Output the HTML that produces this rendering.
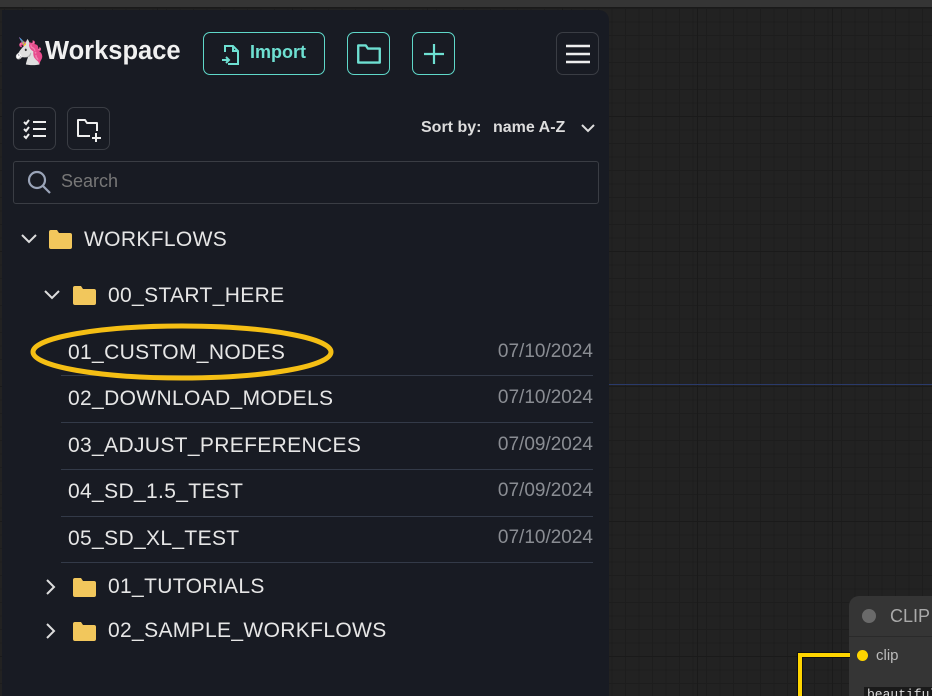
<!DOCTYPE html>
<html><head><meta charset="utf-8"><style>
*{box-sizing:border-box;margin:0;padding:0}
html,body{width:932px;height:696px;overflow:hidden}
body{position:relative;font-family:"Liberation Sans",sans-serif;
background-color:#222;
background-image:linear-gradient(#1a1a1a 1px,transparent 1px),linear-gradient(90deg,#1a1a1a 1px,transparent 1px),linear-gradient(#1d1d1d 1px,transparent 1px),linear-gradient(90deg,#1d1d1d 1px,transparent 1px);
background-size:135px 135px,135px 135px,13.5px 13.5px,13.5px 13.5px;
background-position:0 116px,562px 0,0 8px,4px 0}
.top{position:absolute;left:0;top:0;width:932px;height:8px;background:#353535;border-bottom:1px solid #1a1a1a}
.blue{position:absolute;left:608px;top:384px;width:324px;height:1px;background:#2a3a6a}
.panel{position:absolute;left:2px;top:10px;width:607px;height:686px;background:#181b23;border-radius:0 10px 0 0}
.a{position:absolute}
.btn{position:absolute;border:1px solid #5fd8c9;border-radius:7px;height:43px;top:32px;color:#6ee0d2}
.gbtn{position:absolute;border:1px solid #3a3d44;border-radius:7px;height:43px;width:43px}
.t{position:absolute;color:#e6e6e6;font-size:21px;letter-spacing:0.35px}
.d{position:absolute;right:339px;color:#8a8d93;font-size:19px}
.sep{position:absolute;left:61px;width:532px;height:1px;background:#333a48}
</style></head><body>
<div class="top"></div><div class="blue"></div>
<div class="panel"></div>
<div class="a" style="left:13px;top:36px;font-size:26px">🦄</div>
<div class="t" style="left:45px;top:37px;font-size:25.5px;letter-spacing:0;font-weight:bold;color:#f0f0f0">Workspace</div>
<div class="btn" style="left:203px;width:122px">
<svg class="a" style="left:16px;top:10px" width="22" height="24" viewBox="0 0 22 24" fill="none" stroke="#6ee0d2" stroke-width="2"><path d="M5 9V3h8l5 5v13H8"/><path d="M13 3v5h5"/><path d="M2 17h7M6 14l3 3-3 3"/></svg>
<span class="a" style="left:46px;top:9px;font-size:18px;font-weight:bold">Import</span></div>
<div class="btn" style="left:347px;width:43px"><svg class="a" style="left:7px;top:7px" width="28" height="28" viewBox="0 0 26 26" fill="none" stroke="#6ee0d2" stroke-width="2.2"><path d="M3 5h7l2 3h11v13H3z" stroke-linejoin="round"/></svg></div>
<div class="btn" style="left:412px;width:43px"><svg class="a" style="left:9px;top:9px" width="24" height="24" fill="none" stroke="#6ee0d2" stroke-width="2.2"><path d="M12 2v20M2 12h20"/></svg></div>
<div class="gbtn" style="left:556px;top:32px"><svg class="a" style="left:8px;top:10px" width="26" height="22" stroke="#eee" stroke-width="2.6"><path d="M1 3h24M1 11h24M1 19h24"/></svg></div>
<div class="gbtn" style="left:13px;top:107px"><svg class="a" style="left:8px;top:9px" width="26" height="24" fill="none" stroke="#eee" stroke-width="2"><path d="M2 5l2 2 3-4M2 12l2 2 3-4M2 19l2 2 3-4M11 5h13M11 12h13M11 19h13"/></svg></div>
<div class="gbtn" style="left:67px;top:107px"><svg class="a" style="left:8px;top:8px" width="28" height="28" fill="none" stroke="#eee" stroke-width="2"><path d="M14 20H2V4h7l2 3h10v8" stroke-linejoin="round"/><path d="M20 17v9M16 22h9"/></svg></div>
<div class="t" style="left:421px;top:119px;font-size:16px;letter-spacing:0;font-weight:bold;color:#ddd">Sort by:</div>
<div class="t" style="left:493px;top:119px;font-size:16px;letter-spacing:0;font-weight:bold;color:#ddd">name A-Z</div>
<svg class="a" style="left:580px;top:122px" width="16" height="12" fill="none" stroke="#ddd" stroke-width="2"><path d="M2 3l6 6 6-6"/></svg>
<div class="a" style="left:13px;top:161px;width:586px;height:43px;border:1px solid #3a3d44;border-radius:3px"></div>
<svg class="a" style="left:27px;top:170px" width="26" height="26" fill="none" stroke="#9aa4b8" stroke-width="2.2"><circle cx="10" cy="10" r="8"/><path d="M16 16l7 7"/></svg>
<div class="t" style="left:61px;top:171px;font-size:18px;letter-spacing:0;color:#777">Search</div>
<svg class="a" style="left:20px;top:233px" width="18" height="12" fill="none" stroke="#ddd" stroke-width="2"><path d="M2 2l7 7 7-7"/></svg>
<svg class="a" style="left:48px;top:228px" width="25" height="22"><path d="M1 4q0-2 2-2h6l2 3h11q2 0 2 2v12q0 2-2 2H3q-2 0-2-2z" fill="#f2c75c"/></svg>
<div class="t" style="left:84px;top:228px">WORKFLOWS</div>
<svg class="a" style="left:43px;top:289px" width="18" height="12" fill="none" stroke="#ddd" stroke-width="2"><path d="M2 2l7 7 7-7"/></svg>
<svg class="a" style="left:72px;top:284px" width="25" height="22"><path d="M1 4q0-2 2-2h6l2 3h11q2 0 2 2v12q0 2-2 2H3q-2 0-2-2z" fill="#f2c75c"/></svg>
<div class="t" style="left:108px;top:284px">00_START_HERE</div>
<div class="t" style="left:68px;top:341px">01_CUSTOM_NODES</div><div class="d" style="top:341px">07/10/2024</div>
<div class="sep" style="top:375px"></div>
<div class="t" style="left:68px;top:387px">02_DOWNLOAD_MODELS</div><div class="d" style="top:387px">07/10/2024</div>
<div class="sep" style="top:422px"></div>
<div class="t" style="left:68px;top:434px">03_ADJUST_PREFERENCES</div><div class="d" style="top:434px">07/09/2024</div>
<div class="sep" style="top:469px"></div>
<div class="t" style="left:68px;top:480px">04_SD_1.5_TEST</div><div class="d" style="top:480px">07/09/2024</div>
<div class="sep" style="top:516px"></div>
<div class="t" style="left:68px;top:527px">05_SD_XL_TEST</div><div class="d" style="top:527px">07/10/2024</div>
<div class="sep" style="top:562px"></div>
<svg class="a" style="left:45px;top:578px" width="12" height="18" fill="none" stroke="#ddd" stroke-width="2"><path d="M2 2l7 7-7 7"/></svg>
<svg class="a" style="left:72px;top:576px" width="25" height="22"><path d="M1 4q0-2 2-2h6l2 3h11q2 0 2 2v12q0 2-2 2H3q-2 0-2-2z" fill="#f2c75c"/></svg>
<div class="t" style="left:108px;top:575px">01_TUTORIALS</div>
<svg class="a" style="left:45px;top:622px" width="12" height="18" fill="none" stroke="#ddd" stroke-width="2"><path d="M2 2l7 7-7 7"/></svg>
<svg class="a" style="left:72px;top:620px" width="25" height="22"><path d="M1 4q0-2 2-2h6l2 3h11q2 0 2 2v12q0 2-2 2H3q-2 0-2-2z" fill="#f2c75c"/></svg>
<div class="t" style="left:108px;top:619px">02_SAMPLE_WORKFLOWS</div>
<svg class="a" style="left:28px;top:320px" width="310" height="64"><ellipse cx="154" cy="32" rx="149" ry="26" fill="none" stroke="#f5bf14" stroke-width="5"/></svg>
<div class="a" style="left:849px;top:596px;width:90px;height:110px;background:#353535;border-radius:10px 0 0 0"></div>
<div class="a" style="left:849px;top:636px;width:90px;height:1px;background:#2a2a2a"></div>
<div class="a" style="left:862px;top:609px;width:14px;height:14px;border-radius:50%;background:#6a6a6a"></div>
<div class="t" style="left:890px;top:606px;font-size:18px;letter-spacing:0;color:#aaa">CLIP</div>
<div class="a" style="left:857px;top:650px;width:11px;height:11px;border-radius:50%;background:#ffd500"></div>
<div class="t" style="left:876px;top:647px;font-size:15px;letter-spacing:0;color:#bbb">clip</div>
<div class="a" style="left:864px;top:687px;width:70px;height:12px;background:#1a1a1a;color:#ddd;font:13px 'Liberation Mono',monospace;padding-left:3px">beautiful</div>
<svg class="a" style="left:795px;top:650px" width="60" height="50" fill="none" stroke="#ffd500" stroke-width="4"><path d="M55 5H5v45" stroke="#111" stroke-width="6"/><path d="M55 5H5v45"/></svg>
</body></html>
